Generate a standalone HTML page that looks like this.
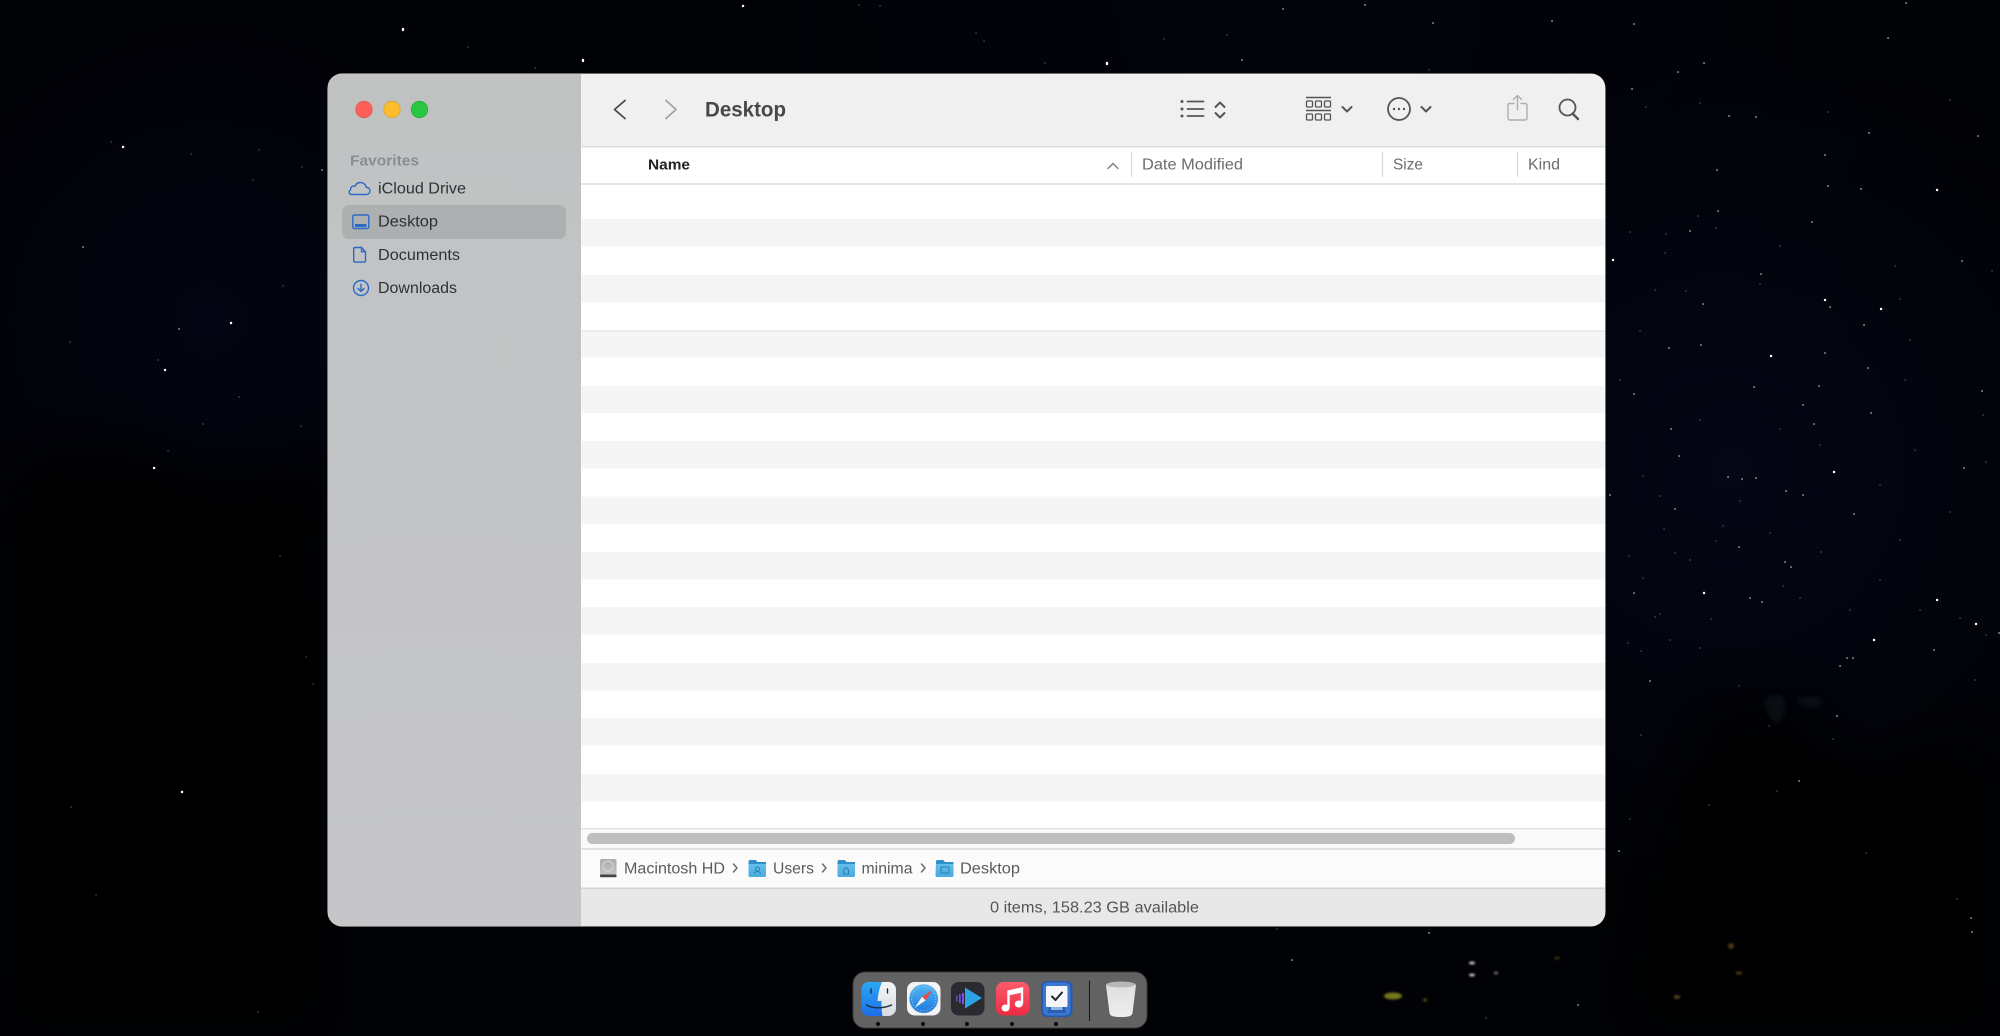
<!DOCTYPE html>
<html><head><meta charset="utf-8"><title>Desktop</title>
<style>
html,body{margin:0;padding:0;background:#000;width:2000px;height:1036px;overflow:hidden}
svg{display:block}
text{font-family:"Liberation Sans",sans-serif}
</style></head><body>
<svg xmlns="http://www.w3.org/2000/svg" width="2000" height="1036" viewBox="0 0 2000 1036">
<defs>
<radialGradient id="b1" gradientUnits="userSpaceOnUse" cx="1730" cy="470" r="430"><stop offset="0" stop-color="#040716" stop-opacity=".95"/><stop offset="1" stop-color="#040716" stop-opacity="0"/></radialGradient>
<radialGradient id="b2" gradientUnits="userSpaceOnUse" cx="210" cy="320" r="340"><stop offset="0" stop-color="#030513" stop-opacity=".95"/><stop offset="1" stop-color="#030513" stop-opacity="0"/></radialGradient>
<radialGradient id="b3" gradientUnits="userSpaceOnUse" cx="1300" cy="0" r="700"><stop offset="0" stop-color="#02040c" stop-opacity=".9"/><stop offset="1" stop-color="#02040c" stop-opacity="0"/></radialGradient>
<linearGradient id="sb" x1="0" y1="0" x2="0" y2="1"><stop offset="0" stop-color="#c0c2c2"/><stop offset=".5" stop-color="#c3c4c6"/><stop offset="1" stop-color="#c6c6c9"/></linearGradient>
<linearGradient id="fb" x1="0" y1="0" x2="0" y2="1"><stop offset="0" stop-color="#2aa8f5"/><stop offset="1" stop-color="#1c6ee8"/></linearGradient>
<linearGradient id="fr" x1="0" y1="0" x2="0" y2="1"><stop offset="0" stop-color="#f4f5f6"/><stop offset="1" stop-color="#d8dce2"/></linearGradient>
<linearGradient id="mu" x1="0" y1="0" x2="0" y2="1"><stop offset="0" stop-color="#fa5c6c"/><stop offset="1" stop-color="#ee2a42"/></linearGradient>
<linearGradient id="sa" x1="0" y1="0" x2="0" y2="1"><stop offset="0" stop-color="#52b8f5"/><stop offset="1" stop-color="#1e78dc"/></linearGradient>
<linearGradient id="tr" x1="0" y1="0" x2="0" y2="1"><stop offset="0" stop-color="#dcdedd"/><stop offset="1" stop-color="#eeeeee"/></linearGradient>
<linearGradient id="fo" x1="0" y1="0" x2="0" y2="1"><stop offset="0" stop-color="#6cc5ee"/><stop offset="1" stop-color="#4aa9df"/></linearGradient>
<linearGradient id="hd" x1="0" y1="0" x2="0" y2="1"><stop offset="0" stop-color="#a8acab"/><stop offset="1" stop-color="#c6c9c8"/></linearGradient>
<filter id="bl" x="-50%" y="-50%" width="200%" height="200%"><feGaussianBlur stdDeviation="30"/></filter>
<filter id="bs" x="-50%" y="-50%" width="200%" height="200%"><feGaussianBlur stdDeviation="1.100"/></filter>
<filter id="bc" x="-50%" y="-50%" width="200%" height="200%"><feGaussianBlur stdDeviation="3"/></filter>
<filter id="bt" x="-50%" y="-50%" width="200%" height="200%"><feGaussianBlur stdDeviation=".35"/></filter>
<clipPath id="win"><rect x="328" y="74" width="1277" height="852" rx="14"/></clipPath>
</defs>

<!-- wallpaper -->
<rect width="2000" height="1036" fill="#010205"/>
<rect width="2000" height="1036" fill="url(#b3)"/>
<rect width="2000" height="1036" fill="url(#b1)"/>
<rect width="2000" height="1036" fill="url(#b2)"/>
<path d="M0 480 C80 440 130 430 180 470 C230 480 280 470 328 460 V1036 H0Z" fill="#010103" filter="url(#bl)"/>
<path d="M1640 900 C1660 820 1690 740 1720 700 C1780 680 1820 720 1850 780 C1880 760 1920 740 2000 730 V1036 H1620Z" fill="#010103" filter="url(#bl)"/>
<g fill="#11141c" filter="url(#bc)" opacity=".6"><path d="M1764 700q12 -10 20 -2q4 12 -4 26q-12 -2 -16 -24zM1794 700q20 -8 30 2q-12 12 -30 -2z"/></g>

<!-- stars -->
<g fill="none" stroke-linecap="round" filter="url(#bt)">
<path stroke="#fff" stroke-width="2.400" d="M123 147h.1M231 323h.1M165 370h.1M154 468h.1M182 792h.1M403 29v1M583 60v1M743 6h.1M1107 63v1M1613 260h.1M1825 300h.1M1881 309h.1M1771 356h.1M1937 190h.1M1834 472h.1M1704 593h.1M1937 600h.1M1874 640h.1M1976 624h.1"/>
<path stroke="#cfd2d8" stroke-width="1.500" d="M179 329h.1M83 247h.1M322 170h.1M1634 24h.1M1704 63h.1M1678 72h.1M1632 89h.1M1729 116h.1M1756 117h.1M1888 38h.1M1906 3h.1M1869 133h.1M1978 136h.1M1825 155h.1M1828 186h.1M1861 189h.1M1812 222h.1M1717 170h.1M1690 231h.1M1718 211h.1M1761 274h.1M1703 304h.1M1830 307h.1M1864 325h.1M1701 345h.1M1669 348h.1M1868 368h.1M1825 353h.1M1754 387h.1M1819 386h.1M1982 391h.1M1962 261h.1M1634 394h.1M1803 405h.1M1871 413h.1M1814 424h.1M1671 429h.1M1679 456h.1M1728 477h.1M1742 479h.1M1756 478h.1M1964 468h.1M1786 491h.1M1803 495h.1M1610 495h.1M1675 509h.1M1854 514h.1M1739 547h.1M1785 562h.1M1791 567h.1M1634 593h.1M1750 598h.1M1762 602h.1M1847 658h.1M1853 658h.1M1840 666h.1M1934 650h.1M1650 681h.1M1837 716h.1M1799 781h.1M1971 918h.1M1972 932h.1M1619 851h.1M1578 1005h.1M1292 960h.1M1429 933h.1M1365 5h.1M1283 9h.1M1433 23h.1M1552 21h.1M1242 60h.1M1999 633h.1"/>
<path stroke="#6d717c" stroke-width="1.200" d="M111 142h.1M191 154h.1M259 150h.1M302 167h.1M253 180h.1M283 286h.1M70 342h.1M158 360h.1M239 397h.1M203 424h.1M301 426h.1M168 451h.1M71 807h.1M96 895h.1M258 1012h.1M306 657h.1M313 684h.1M280 556h.1M1698 216h.1M1666 234h.1M1760 284h.1M1686 291h.1M1643 476h.1M1950 512h.1M1664 529h.1M1723 526h.1M1716 541h.1M1675 553h.1M1629 556h.1M1821 552h.1M1643 578h.1M1783 586h.1M1655 617h.1M1660 614h.1M1711 619h.1M1628 643h.1M1641 651h.1M1986 635h.1M1739 686h.1M1769 726h.1M1641 735h.1M1833 739h.1M1777 791h.1M1709 805h.1M1630 819h.1M1866 853h.1M1957 899h.1M1986 462h.1M1983 415h.1M1992 271h.1M1277 929h.1M1486 1018h.1M859 5h.1M880 6h.1M976 33h.1M984 41h.1M1227 35h.1M468 47h.1M1045 63h.1M535 68h.1M1429 70h.1M1164 39h.1M1646 107h.1M1700 103h.1M1828 112h.1M1950 100h.1M1895 266h.1M1655 290h.1M1640 331h.1M1716 228h.1M1780 246h.1M1900 299h.1M1910 340h.1M1630 232h.1M1665 253h.1M1620 380h.1M1700 420h.1M1780 429h.1M1820 445h.1M1905 380h.1M1915 450h.1M1880 485h.1M1740 501h.1M1660 496h.1M1770 533h.1M1800 598h.1M1850 610h.1M1880 580h.1M1690 560h.1M1670 640h.1M1700 648h.1M1900 540h.1M1920 610h.1M1960 618h.1M1975 680h.1"/>
</g>
<g filter="url(#bs)">
<ellipse cx="1393" cy="996" rx="9" ry="3.500" fill="#75771c"/><ellipse cx="1425" cy="1000" rx="2" ry="1.500" fill="#55551e"/>
<ellipse cx="1472" cy="963" rx="3" ry="1.200" fill="#e8e8e8"/><ellipse cx="1472" cy="975" rx="3" ry="1.200" fill="#e8e8e8"/><ellipse cx="1496" cy="973" rx="2" ry="1.200" fill="#888"/><ellipse cx="1557" cy="958" rx="3" ry="1.500" fill="#3a300e"/>
<ellipse cx="1731" cy="946" rx="3" ry="3" fill="#50370e"/><ellipse cx="1739" cy="973" rx="3.500" ry="1.500" fill="#503c12"/><ellipse cx="1677" cy="997" rx="3.500" ry="2" fill="#4c3c1c"/>
</g>

<!-- window -->
<rect x="327.500" y="73.500" width="1278" height="853" rx="14.500" fill="#dedede"/>
<g clip-path="url(#win)">
<rect x="328" y="74" width="1277" height="852" fill="#fff"/>
<rect x="328" y="74" width="253" height="852" fill="url(#sb)"/>
<rect x="581" y="74" width="1024" height="72.500" fill="#f0f0f0"/>
<rect x="581" y="146" width="1024" height="1.500" fill="#dcdcdc"/>
<rect x="581" y="183" width="1024" height="2" fill="#e4e4e4"/>
<g fill="#f5f5f5">
<rect x="581" y="219" width="1024" height="27.500"/><rect x="581" y="275" width="1024" height="27.500"/><rect x="581" y="330.500" width="1024" height="27"/><rect x="581" y="386" width="1024" height="27"/><rect x="581" y="441" width="1024" height="27.500"/><rect x="581" y="496.500" width="1024" height="27.500"/><rect x="581" y="552" width="1024" height="27.500"/><rect x="581" y="607" width="1024" height="27.500"/><rect x="581" y="663" width="1024" height="27.500"/><rect x="581" y="718" width="1024" height="27.500"/><rect x="581" y="774" width="1024" height="27.500"/>
</g>
<rect x="581" y="330" width="1024" height="2" fill="#ececec"/>
<rect x="581" y="828" width="1024" height="1.500" fill="#e2e2e2"/>
<rect x="581" y="829.500" width="1024" height="19" fill="#f9f9f9"/>
<rect x="587" y="833" width="928" height="11" rx="5.500" fill="#bebebe"/>
<rect x="581" y="848" width="1024" height="2" fill="#e2e2e2"/>
<rect x="581" y="850" width="1024" height="38" fill="#fbfbfb"/>
<rect x="581" y="887.500" width="1024" height="1.500" fill="#d4d4d4"/>
<rect x="581" y="889" width="1024" height="37" fill="#e8e8e8"/>
</g>

<!-- traffic lights -->
<circle cx="364" cy="109.500" r="8.200" fill="#fc5f58" stroke="#e4544d" stroke-width=".8"/>
<circle cx="392" cy="109.500" r="8.200" fill="#fdbc2e" stroke="#e4a722" stroke-width=".8"/>
<circle cx="419.500" cy="109.500" r="8.200" fill="#2ac840" stroke="#22ac36" stroke-width=".8"/>

<!-- sidebar -->
<rect x="342" y="205" width="224" height="34" rx="7" fill="#adafb0"/>
<text x="350" y="165.500" font-size="15" font-weight="bold" fill="#8a8c8f" textLength="69" lengthAdjust="spacingAndGlyphs">Favorites</text>
<text x="378" y="193.500" font-size="15.500" fill="#2f3235" textLength="88" lengthAdjust="spacingAndGlyphs">iCloud Drive</text>
<text x="378" y="226.500" font-size="15.500" fill="#2f3235" textLength="60" lengthAdjust="spacingAndGlyphs">Desktop</text>
<text x="378" y="260" font-size="15.500" fill="#2f3235" textLength="82" lengthAdjust="spacingAndGlyphs">Documents</text>
<text x="378" y="293" font-size="15.500" fill="#2f3235" textLength="79" lengthAdjust="spacingAndGlyphs">Downloads</text>
<g fill="none" stroke="#2a6bc6" stroke-width="1.400" stroke-linejoin="round" stroke-linecap="round">
<path d="M356 194.500h10c2.600 0 4-1.700 4-3.600 0-2.200-1.700-3.600-3.700-3.600-.7-3-3-4.800-5.800-4.800-2.600 0-4.600 1.500-5.600 3.800-.4-.2-.8-.2-1.200-.2-2 0-3.400 1.700-3.100 3.700-1 .6-1.400 1.600-1.400 2.500 0 1.300 1 2.200 2.800 2.200z"/>
<rect x="352.800" y="215" width="16" height="13.500" rx="1.500"/>
<path d="M355 247.500h6.500l4 4.300v9c0 .8-.6 1.300-1.300 1.300h-9.200c-.8 0-1.300-.5-1.300-1.300v-12c0-.8.6-1.300 1.300-1.300z"/>
<path d="M361.500 247.500v4.300h4"/>
<circle cx="361" cy="288" r="7.500"/>
<path d="M361 284.300v7M358 288.500l3 3 3-3"/>
</g>
<rect x="355" y="224" width="11.500" height="3" fill="#2a6bc6"/>

<!-- toolbar -->
<g fill="none" stroke="#4a4a4a" stroke-width="1.800" stroke-linecap="round" stroke-linejoin="round">
<path d="M625 100.500l-10.500 9 10.500 9"/>
<path d="M666 100.500l10 9-10 9" stroke="#a3a3a3"/>
</g>
<text x="705" y="116.500" font-size="21.500" font-weight="bold" fill="#484848" textLength="81" lengthAdjust="spacingAndGlyphs">Desktop</text>
<g fill="none" stroke="#555" stroke-width="1.800" stroke-linecap="round" stroke-linejoin="round">
<path d="M1187.500 101.500h16M1187.500 109h16M1187.500 116h16"/>
<path d="M1215.500 107l4.500-4.500 4.500 4.500M1215.500 113l4.500 4.500 4.500-4.500" stroke-width="2"/>
<path d="M1306 97.500h25M1306 110.500h25" stroke-linecap="butt" stroke-width="1.600"/>
<path d="M1342.500 107l4.500 4.500 4.500-4.500M1421.500 107l4.500 4.500 4.500-4.500" stroke-width="2"/>
<circle cx="1399" cy="109" r="11"/>
<path d="M1572.500 113.500l5.500 5.500" stroke-width="2.400"/>
<circle cx="1567.500" cy="107.500" r="8"/>
</g>
<g fill="none" stroke="#555" stroke-width="1.300">
<rect x="1306.500" y="101" width="6" height="6" rx="1"/><rect x="1315.500" y="101" width="6" height="6" rx="1"/><rect x="1324.500" y="101" width="6" height="6" rx="1"/>
<rect x="1306.500" y="114" width="6" height="6" rx="1"/><rect x="1315.500" y="114" width="6" height="6" rx="1"/><rect x="1324.500" y="114" width="6" height="6" rx="1"/>
</g>
<g fill="#555"><circle cx="1182" cy="101.500" r="1.500"/><circle cx="1182" cy="109" r="1.500"/><circle cx="1182" cy="116" r="1.500"/>
<circle cx="1394" cy="109" r="1.200"/><circle cx="1399" cy="109" r="1.200"/><circle cx="1404" cy="109" r="1.200"/></g>
<g fill="none" stroke="#aeaeae" stroke-width="1.400" stroke-linecap="round" stroke-linejoin="round">
<path d="M1514 103.500h-4c-1.200 0-2 .8-2 2v12.500c0 1.200.8 2 2 2h15c1.200 0 2-.8 2-2v-12.500c0-1.200-.8-2-2-2h-4"/>
<path d="M1517.500 110v-14M1513.500 99.500l4-4 4 4"/>
</g>

<!-- column headers -->
<text x="648" y="169.500" font-size="15" font-weight="bold" fill="#222" textLength="42" lengthAdjust="spacingAndGlyphs">Name</text>
<path d="M1108 168.500l5-5 5 5" fill="none" stroke="#777" stroke-width="1.300" stroke-linecap="round" stroke-linejoin="round"/>
<g stroke="#d9d9d9" stroke-width="1.300"><path d="M1131.500 152v25M1382.500 152v25M1517.500 152v25"/></g>
<g font-size="15.500" fill="#6c6c6c">
<text x="1142" y="169.500" textLength="101" lengthAdjust="spacingAndGlyphs">Date Modified</text>
<text x="1393" y="169.500" textLength="30" lengthAdjust="spacingAndGlyphs">Size</text>
<text x="1528" y="169.500" textLength="32" lengthAdjust="spacingAndGlyphs">Kind</text>
</g>

<!-- path bar -->
<rect x="600" y="859" width="16.500" height="18" rx="2" fill="url(#hd)"/>
<rect x="600" y="874.500" width="16.500" height="2.800" rx="1" fill="#444"/>
<circle cx="608" cy="866" r="5" fill="none" stroke="#d8dada" stroke-width="1"/>
<g>
<path d="M748.500 861.500c0-1 .6-1.500 1.500-1.500h5c.7 0 1.200.3 1.600 1l.7 1h7.200c1 0 1.500.5 1.500 1.500v12c0 1-.5 1.500-1.500 1.500H750c-1 0-1.500-.5-1.500-1.500z" fill="url(#fo)"/>
<path d="M748.500 863c0-2 .5-3 1.500-3h5c.7 0 1.200.3 1.600 1l.7 1h8.700v2h-17.500z" fill="#2f8fc8"/>
<path d="M837.500 861.500c0-1 .6-1.500 1.500-1.500h5c.7 0 1.200.3 1.600 1l.7 1h7.200c1 0 1.500.5 1.500 1.500v12c0 1-.5 1.500-1.500 1.500H839c-1 0-1.500-.5-1.500-1.500z" fill="url(#fo)"/>
<path d="M837.500 863c0-2 .5-3 1.500-3h5c.7 0 1.200.3 1.600 1l.7 1h8.700v2h-17.500z" fill="#2f8fc8"/>
<path d="M936 861.500c0-1 .6-1.500 1.500-1.500h5c.7 0 1.200.3 1.600 1l.7 1h7.200c1 0 1.500.5 1.500 1.500v12c0 1-.5 1.500-1.500 1.500h-15c-1 0-1.500-.5-1.500-1.500z" fill="url(#fo)"/>
<path d="M936 863c0-2 .5-3 1.500-3h5c.7 0 1.200.3 1.600 1l.7 1h8.700v2H936z" fill="#2f8fc8"/>
<g fill="none" stroke="#2a7fb4" stroke-width="1"><circle cx="757.500" cy="869" r="2"/><path d="M754.500 874c.4-2 1.500-2.500 3-2.500s2.600.5 3 2.500"/><path d="M843.500 874v-4l2.500-2.500 2.500 2.500v4z"/><rect x="941" y="867" width="8" height="6"/></g>
</g>
<g font-size="15.500" fill="#5c5c5c">
<text x="624" y="873.500" textLength="101" lengthAdjust="spacingAndGlyphs">Macintosh HD</text>
<text x="773" y="873.500" textLength="41" lengthAdjust="spacingAndGlyphs">Users</text>
<text x="861.500" y="873.500" textLength="51" lengthAdjust="spacingAndGlyphs">minima</text>
<text x="960" y="873.500" textLength="60" lengthAdjust="spacingAndGlyphs">Desktop</text>
</g>
<g fill="none" stroke="#666" stroke-width="1.400" stroke-linecap="round" stroke-linejoin="round">
<path d="M733.500 864l3.500 4-3.500 4M822.500 864l3.500 4-3.500 4M921.500 864l3.500 4-3.500 4"/>
</g>
<text x="990" y="912.500" font-size="15.500" fill="#555" textLength="209" lengthAdjust="spacingAndGlyphs">0 items, 158.23 GB available</text>

<!-- dock -->
<rect x="853" y="972" width="294" height="56" rx="12" fill="#626262" stroke="#3a3a3a" stroke-width="1"/>
<!-- finder -->
<rect x="862" y="982" width="34" height="34" rx="7.500" fill="url(#fr)"/>
<path d="M869.500 982H882c-2.500 6-4 12-4.500 19h4c-.2 4 .1 8.500 1 15h-13.500c-4.500 0-7.500-3-7.500-7.500v-19c0-4.500 3-7.500 7.500-7.500z" fill="url(#fb)"/>
<g fill="none" stroke="#1e2b46" stroke-width="1.400" stroke-linecap="round"><path d="M871 989v4M887.500 989v4"/><path d="M866.500 1005c6 3.500 16 4 25 0" /></g>
<!-- safari -->
<rect x="907" y="982" width="33.500" height="33.500" rx="7.500" fill="#f2f3f4"/>
<circle cx="923.700" cy="998.700" r="14.500" fill="url(#sa)" stroke="#cfd4da" stroke-width=".6"/>
<circle cx="923.700" cy="998.700" r="12" fill="none" stroke="#a9d4f4" stroke-width=".9" stroke-dasharray="1 2"/>
<path d="M932.500 990l-10.500 6.700 3.700 3.700z" fill="#f04b3e"/>
<path d="M915 1007.500l7-10.800 3.700 3.700z" fill="#f3f4f6"/>
<!-- infuse -->
<rect x="951" y="982" width="33.500" height="33.500" rx="7.500" fill="#2a2b30"/>
<path d="M965 987.500v21l17-10.500z" fill="#2ba3e6"/>
<rect x="956" y="995.500" width="1.500" height="6" fill="#5a4cc4"/><rect x="959" y="994" width="1.800" height="9" fill="#6650cc"/><rect x="962" y="993" width="2" height="11" fill="#7158d4"/>
<!-- music -->
<rect x="996" y="982" width="33.500" height="33.500" rx="7.500" fill="url(#mu)"/>
<path d="M1008.500 1008v-16.500l13.500-3v15" fill="none" stroke="#fff" stroke-width="2.400"/>
<path d="M1008.500 991.500l13.500-3v4l-13.500 3z" fill="#fff"/>
<ellipse cx="1005.500" cy="1008" rx="4" ry="3.500" fill="#fff"/><ellipse cx="1018.800" cy="1004" rx="4" ry="3.500" fill="#fff"/>
<!-- omnifocus style -->
<rect x="1041" y="981" width="31.500" height="36" rx="6" fill="#2759b4"/>
<rect x="1043" y="982.500" width="27.500" height="33" rx="5" fill="#3a78d0"/>
<rect x="1046" y="986" width="21.500" height="21" rx="1.500" fill="#f4f6fa"/>
<path d="M1052 996.500l3.500 3.500 6.500-7.500" fill="none" stroke="#23262c" stroke-width="2" stroke-linecap="round" stroke-linejoin="round"/>
<path d="M1049 1007h15.500l1.500 6h-18.500z" fill="#2b5cb0"/><rect x="1051" y="1007" width="11.500" height="3" fill="#8db6e4"/>
<!-- separator -->
<path d="M1089.500 980.500v40.500" stroke="#1a1a1a" stroke-width="1.100"/>
<!-- trash -->
<path d="M1106 985c3-4 26-4 30 0l-3.500 28c-.4 3-3.500 4-11.500 4s-11-1-11.500-4z" fill="url(#tr)"/>
<ellipse cx="1121" cy="984.500" rx="14.500" ry="3" fill="#b6b8b7"/>
<!-- dots -->
<g fill="#0a0a0a"><circle cx="878" cy="1024" r="2"/><circle cx="923" cy="1024" r="2"/><circle cx="967" cy="1024" r="2"/><circle cx="1012" cy="1024" r="2"/><circle cx="1056" cy="1024" r="2"/></g>
</svg>
</body></html>
